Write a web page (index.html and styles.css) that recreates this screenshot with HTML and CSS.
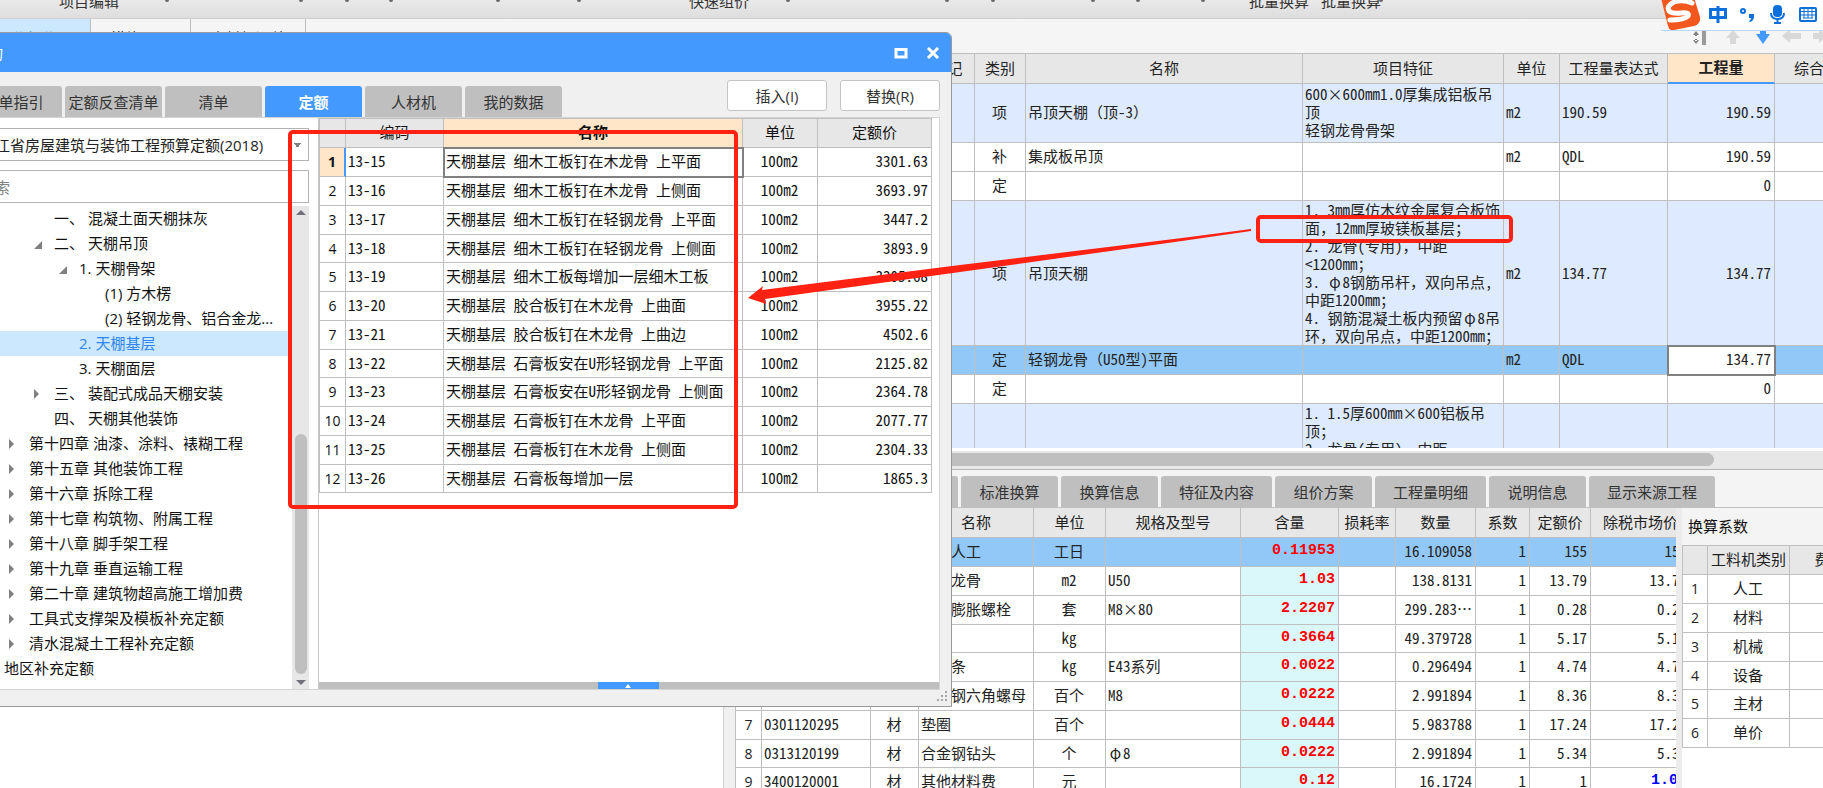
FILE: index.html
```html
<!DOCTYPE html>
<html lang="zh-CN">
<head>
<meta charset="utf-8">
<title>查询</title>
<link rel="stylesheet" href="styles.css">
</head>
<body>
<div class="app">
  <header class="ribbon">
    <span>项目编辑</span><i></i><i></i><i></i><i></i><i></i><i></i>
    <span>快速组价</span><i></i><i></i><i></i><i></i><i></i><i></i>
    <span>批量换算</span><span>批量换算</span><i></i>
  </header>

  <nav class="pages">
    <button class="page page-on">分部分项</button>
    <button class="page">措施项目</button>
    <button class="page page-wide">人材机汇总</button>
    <svg class="tools" width="134" height="16" viewBox="0 0 134 16" aria-hidden="true">
      <path d="M4 5l3-4 3 4zM4 10l3 4 3-4zM6 4h2v2H6zM6 9h2v2H6z" fill="#808080"/>
      <path d="M13 1h4v14h-4z" fill="#9a9a9a"/>
      <path d="M44 0l7 8h-4v6h-6V8h-4z" fill="#d8d8d8"/>
      <path d="M71 0h6v4h4l-7 10-7-10h4z" fill="#4499ff"/>
      <path d="M93 6l8-7v4h11v6h-11v4z" fill="#d8d8d8"/>
      <path d="M124 3h6V-1l8 7-8 7V9h-6z" fill="#d8d8d8"/>
    </svg>
  </nav>

  <main class="bill">
    <table class="grid bill-grid">
      <colgroup><col><col class="w54"><col class="w51"><col class="w277"><col class="w201"><col class="w56"><col class="w108"><col class="w107"><col class="w99"></colgroup>
      <thead>
        <tr><th></th><th>标记</th><th>类别</th><th>名称</th><th>项目特征</th><th>单位</th><th>工程量表达式</th><th class="hot">工程量</th><th>综合单价</th></tr>
      </thead>
      <tbody>
        <tr class="item h59"><td></td><td></td><td class="c">项</td><td>吊顶天棚（顶-3）</td><td>600×600mm1.0厚集成铝板吊<br>顶<br>轻钢龙骨骨架</td><td>m2</td><td>190.59</td><td class="r">190.59</td><td></td></tr>
        <tr><td></td><td></td><td class="c">补</td><td>集成板吊顶</td><td></td><td>m2</td><td>QDL</td><td class="r">190.59</td><td></td></tr>
        <tr><td></td><td></td><td class="c">定</td><td></td><td></td><td></td><td></td><td class="r">0</td><td></td></tr>
        <tr class="item h145"><td></td><td></td><td class="c">项</td><td>吊顶天棚</td><td>1. 3mm厚仿木纹金属复合板饰<br>面，12mm厚玻镁板基层；<br>2. 龙骨(专用)，中距<br>&lt;1200mm；<br>3. <span class="full">φ</span>8钢筋吊杆，双向吊点,<br>中距1200mm；<br>4. 钢筋混凝土板内预留<span class="full">φ</span>8吊<br>环，双向吊点，中距1200mm；</td><td>m2</td><td>134.77</td><td class="r">134.77</td><td></td></tr>
        <tr class="picked"><td></td><td></td><td class="c">定</td><td>轻钢龙骨（U50型)平面</td><td></td><td>m2</td><td>QDL</td><td class="r focus">134.77</td><td></td></tr>
        <tr><td></td><td></td><td class="c">定</td><td></td><td></td><td></td><td></td><td class="r">0</td><td></td></tr>
        <tr class="item"><td></td><td></td><td></td><td></td><td>1. 1.5厚600mm×600铝板吊<br>顶；<br>2. 龙骨(专用)，中距</td><td></td><td></td><td></td><td></td></tr>
      </tbody>
    </table>
  </main>

  <section class="detail">
    <div class="hscroll"><div class="hthumb"></div></div>
    <div class="panes">
      <div class="pane-left"></div>
      <div class="splitter"></div>
      <div class="pane-main">
        <nav class="tabs detail-tabs">
          <button class="tab">工料机显示</button><button class="tab">单价构成</button><button class="tab">标准换算</button><button class="tab">换算信息</button><button class="tab">特征及内容</button><button class="tab">组价方案</button><button class="tab">工程量明细</button><button class="tab">说明信息</button><button class="tab">显示来源工程</button>
        </nav>
        <div class="split">
          <div class="parts">
            <table class="grid parts-grid">
              <colgroup><col class="w26"><col class="w109"><col class="w48"><col class="w115"><col class="w72"><col class="w135"><col class="w98"><col class="w57"><col class="w80"><col class="w54"><col class="w61"><col class="w100"></colgroup>
              <thead>
                <tr><th></th><th>编码</th><th>类别</th><th>名称</th><th>单位</th><th>规格及型号</th><th>含量</th><th>损耗率</th><th>数量</th><th>系数</th><th>定额价</th><th>除税市场价</th></tr>
              </thead>
              <tbody>
                <tr class="picked"><td class="n">1</td><td></td><td class="c">人</td><td>二类人工</td><td class="c">工日</td><td></td><td class="qty">0.11953</td><td></td><td class="r">16.109058</td><td class="r">1</td><td class="r">155</td><td class="r">155</td></tr>
                <tr><td class="n">2</td><td></td><td class="c">材</td><td>轻钢龙骨</td><td class="c">m2</td><td>U50</td><td class="qty">1.03</td><td></td><td class="r">138.8131</td><td class="r">1</td><td class="r">13.79</td><td class="r">13.79</td></tr>
                <tr><td class="n">3</td><td></td><td class="c">材</td><td>金属膨胀螺栓</td><td class="c">套</td><td>M8×80</td><td class="qty">2.2207</td><td></td><td class="r">299.283…</td><td class="r">1</td><td class="r">0.28</td><td class="r">0.28</td></tr>
                <tr><td class="n">4</td><td></td><td class="c">材</td><td></td><td class="c">kg</td><td></td><td class="qty">0.3664</td><td></td><td class="r">49.379728</td><td class="r">1</td><td class="r">5.17</td><td class="r">5.17</td></tr>
                <tr><td class="n">5</td><td></td><td class="c">材</td><td>电焊条</td><td class="c">kg</td><td>E43系列</td><td class="qty">0.0022</td><td></td><td class="r">0.296494</td><td class="r">1</td><td class="r">4.74</td><td class="r">4.74</td></tr>
                <tr><td class="n">6</td><td></td><td class="c">材</td><td>镀锌钢六角螺母</td><td class="c">百个</td><td>M8</td><td class="qty">0.0222</td><td></td><td class="r">2.991894</td><td class="r">1</td><td class="r">8.36</td><td class="r">8.36</td></tr>
                <tr><td class="n">7</td><td>0301120295</td><td class="c">材</td><td>垫圈</td><td class="c">百个</td><td></td><td class="qty">0.0444</td><td></td><td class="r">5.983788</td><td class="r">1</td><td class="r">17.24</td><td class="r">17.24</td></tr>
                <tr><td class="n">8</td><td>0313120199</td><td class="c">材</td><td>合金钢钻头</td><td class="c">个</td><td><span class="full">φ</span>8</td><td class="qty">0.0222</td><td></td><td class="r">2.991894</td><td class="r">1</td><td class="r">5.34</td><td class="r">5.34</td></tr>
                <tr><td class="n">9</td><td>3400120001</td><td class="c">材</td><td>其他材料费</td><td class="c">元</td><td></td><td class="qty">0.12</td><td></td><td class="r">16.1724</td><td class="r">1</td><td class="r">1</td><td class="qty price">1.00</td></tr>
              </tbody>
            </table>
          </div>
          <aside class="factors">
            <h2>换算系数</h2>
            <table class="grid factor-grid">
              <colgroup><col class="w25"><col class="w82"><col class="w80"></colgroup>
              <thead><tr><th></th><th>工料机类别</th><th>费用</th></tr></thead>
              <tbody>
                <tr><td class="n">1</td><td class="c">人工</td><td></td></tr>
                <tr><td class="n">2</td><td class="c">材料</td><td></td></tr>
                <tr><td class="n">3</td><td class="c">机械</td><td></td></tr>
                <tr><td class="n">4</td><td class="c">设备</td><td></td></tr>
                <tr><td class="n">5</td><td class="c">主材</td><td></td></tr>
                <tr><td class="n">6</td><td class="c">单价</td><td></td></tr>
              </tbody>
            </table>
          </aside>
        </div>
      </div>
    </div>
  </section>
</div>

<section class="dialog" role="dialog" aria-labelledby="dlg-title">
  <header class="titlebar">
    <h1 id="dlg-title">查询</h1>
    <button class="win" aria-label="最大化"><svg width="14" height="12" viewBox="0 0 14 12"><path d="M2 2.5h10v7.500H2z" fill="none" stroke="#fff" stroke-width="3"/></svg></button>
    <button class="win" aria-label="关闭"><svg width="14" height="12" viewBox="0 0 14 12"><path d="M2 1l10 10M12 1L2 11" fill="none" stroke="#fff" stroke-width="3"/></svg></button>
  </header>
  <div class="toolbar">
    <nav class="tabs">
      <button class="tab">清单指引</button><button class="tab">定额反查清单</button><button class="tab">清单</button><button class="tab tab-on">定额</button><button class="tab">人材机</button><button class="tab">我的数据</button>
    </nav>
    <div class="actions"><button class="act">插入(I)</button><button class="act">替换(R)</button></div>
  </div>
  <div class="body">
    <div class="side">
      <select class="field" aria-label="定额库"><option>浙江省房屋建筑与装饰工程预算定额(2018)</option></select>
      <input class="field" type="text" placeholder="搜索" aria-label="搜索">
      <div class="treebox">
        <ul class="tree">
          <li class="l2">一、 混凝土面天棚抹灰</li>
          <li class="l2 open">二、 天棚吊顶</li>
          <li class="l3 open">1. 天棚骨架</li>
          <li class="l4">(1) 方木楞</li>
          <li class="l4">(2) 轻钢龙骨、铝合金龙...</li>
          <li class="l3 sel">2. 天棚基层</li>
          <li class="l3">3. 天棚面层</li>
          <li class="l2 shut">三、 装配式成品天棚安装</li>
          <li class="l2">四、 天棚其他装饰</li>
          <li class="l1 shut">第十四章 油漆、涂料、裱糊工程</li>
          <li class="l1 shut">第十五章 其他装饰工程</li>
          <li class="l1 shut">第十六章 拆除工程</li>
          <li class="l1 shut">第十七章 构筑物、附属工程</li>
          <li class="l1 shut">第十八章 脚手架工程</li>
          <li class="l1 shut">第十九章 垂直运输工程</li>
          <li class="l1 shut">第二十章 建筑物超高施工增加费</li>
          <li class="l1 shut">工具式支撑架及模板补充定额</li>
          <li class="l1 shut">清水混凝土工程补充定额</li>
          <li class="l0">地区补充定额</li>
        </ul>
        <div class="vscroll">
          <svg width="10" height="5" viewBox="0 0 10 5"><path d="M0 5l5-5 5 5z" fill="#70707a"/></svg>
          <div class="vthumb"></div>
          <svg width="10" height="5" viewBox="0 0 10 5"><path d="M0 0l5 5 5-5z" fill="#70707a"/></svg>
        </div>
      </div>
    </div>
    <div class="results">
      <div class="result-area">
        <table class="grid result-grid">
          <colgroup><col class="w26"><col class="w98"><col><col class="w75"><col class="w114"></colgroup>
          <thead><tr><th></th><th>编码</th><th class="hot">名称</th><th>单位</th><th>定额价</th></tr></thead>
          <tbody>
            <tr><td class="n cur">1</td><td>13-15</td><td class="focus">天棚基层 细木工板钉在木龙骨 上平面</td><td class="c">100m2</td><td class="r">3301.63</td></tr>
            <tr><td class="n">2</td><td>13-16</td><td>天棚基层 细木工板钉在木龙骨 上侧面</td><td class="c">100m2</td><td class="r">3693.97</td></tr>
            <tr><td class="n">3</td><td>13-17</td><td>天棚基层 细木工板钉在轻钢龙骨 上平面</td><td class="c">100m2</td><td class="r">3447.2</td></tr>
            <tr><td class="n">4</td><td>13-18</td><td>天棚基层 细木工板钉在轻钢龙骨 上侧面</td><td class="c">100m2</td><td class="r">3893.9</td></tr>
            <tr><td class="n">5</td><td>13-19</td><td>天棚基层 细木工板每增加一层细木工板</td><td class="c">100m2</td><td class="r">3305.68</td></tr>
            <tr><td class="n">6</td><td>13-20</td><td>天棚基层 胶合板钉在木龙骨 上曲面</td><td class="c">100m2</td><td class="r">3955.22</td></tr>
            <tr><td class="n">7</td><td>13-21</td><td>天棚基层 胶合板钉在木龙骨 上曲边</td><td class="c">100m2</td><td class="r">4502.6</td></tr>
            <tr><td class="n">8</td><td>13-22</td><td>天棚基层 石膏板安在U形轻钢龙骨 上平面</td><td class="c">100m2</td><td class="r">2125.82</td></tr>
            <tr><td class="n">9</td><td>13-23</td><td>天棚基层 石膏板安在U形轻钢龙骨 上侧面</td><td class="c">100m2</td><td class="r">2364.78</td></tr>
            <tr><td class="n">10</td><td>13-24</td><td>天棚基层 石膏板钉在木龙骨 上平面</td><td class="c">100m2</td><td class="r">2077.77</td></tr>
            <tr><td class="n">11</td><td>13-25</td><td>天棚基层 石膏板钉在木龙骨 上侧面</td><td class="c">100m2</td><td class="r">2304.33</td></tr>
            <tr><td class="n">12</td><td>13-26</td><td>天棚基层 石膏板每增加一层</td><td class="c">100m2</td><td class="r">1865.3</td></tr>
          </tbody>
        </table>
      </div>
      <div class="drawer"><button class="pull" aria-label="展开"><svg width="8" height="4" viewBox="0 0 8 4"><path d="M1 4l3-4 3 4z" fill="#fff"/></svg></button></div>
    </div>
  </div>
  <footer class="status">
    <svg width="11" height="11" viewBox="0 0 11 11"><path d="M8 0h2v2H8zM8 4h2v2H8zM4 4h2v2H4zM8 8h2v2H8zM4 8h2v2H4zM0 8h2v2H0z" fill="#a8a8a8"/></svg>
  </footer>
</section>

<div class="ime">
  <svg width="162" height="30" viewBox="0 0 162 30" aria-hidden="true">
    <path d="M0 -2L32 -6 39 17Q40 24 33 26L13 30Q8 31 7 26z" fill="#f2581d"/>
    <path d="M31 3Q22 -1 13 2Q5 6 8 11Q11 14 20 13Q29 12 27 16Q23 20 9 20" fill="none" stroke="#fff" stroke-width="5" stroke-linecap="round"/>
    <g fill="none" stroke="#0d6fdb" stroke-width="3">
      <path d="M49.500 9.500h15v8h-15zM57 6v17"/>
      <circle cx="82" cy="11" r="2" stroke-width="2"/>
      <path d="M110 13q0 6 6.500 6t6.500-6" stroke-width="2"/>
      <path d="M116.500 19v5M113 23h7" stroke-width="2"/>
    </g>
    <path d="M88 14h5v4q-1 3-4 4l-1-1q2-1 2-3h-2z" fill="#0d6fdb"/>
    <rect x="112" y="5" width="9" height="12" rx="4" fill="#0d6fdb"/>
    <rect x="139" y="8" width="16" height="13" rx="1" fill="none" stroke="#0d6fdb" stroke-width="2"/>
    <path d="M139 11.500h16M139 15h16M143 8v10M147 8v10M151 8v10M142 18h10" fill="none" stroke="#0d6fdb" stroke-width="1"/>
  </svg>
</div>

<svg class="marks" width="1823" height="788" viewBox="0 0 1823 788" aria-hidden="true">
  <rect x="290" y="132" width="446" height="375" rx="3" fill="none" stroke="#ff2213" stroke-width="4"/>
  <rect x="1258" y="217" width="253" height="24" rx="3" fill="none" stroke="#ff2213" stroke-width="4"/>
  <path d="M748 298L763 286 762 290 960 265 1182 238 1251 229 1251 231 1182 241 960 272 765 299 766 304z" fill="#ff2213"/>
</svg>
</body>
</html>
```
FILE: styles.css
```css
* { box-sizing: border-box; }
html, body { margin: 0; height: 100%; overflow: hidden; }
body {
  font: 15px/20px "Open Sans", "Noto Sans CJK SC", sans-serif;
  color: #222;
  background: #fff;
}
button, input, select { font: inherit; color: inherit; margin: 0; }
button { padding: 0; border: 0; cursor: pointer; }
svg { display: block; }

.app { height: 100vh; display: flex; flex-direction: column; }

/* ribbon and page tabs */
.ribbon {
  flex: 0 0 19px;
  display: grid;
  grid-template-columns: 106px 134px 46px 44px 107px 81px 112px 97px 159px 46px 100px 45px 65px 48px 72px 58px 1fr;
  align-items: start;
  padding-left: 59px;
  overflow: hidden;
  color: #333;
  background: linear-gradient(#e9e9e9, #dedede);
  border-bottom: 1px solid #cfcfcf;
}
.ribbon span { margin-top: -9px; white-space: nowrap; }
.ribbon i { width: 4px; height: 2px; background: #666; border-radius: 0 0 2px 2px; }
.pages { flex: 0 0 34px; display: flex; background: #f5f5f5; }
.page { width: 100px; padding-top: 3px; background: #f5f5f5; border-right: 1px solid #bdbdbd; }
.page-on { width: 91px; color: #3a8ff5; background: #cce8ff; padding-right: 8px; }
.page-wide { width: 115px; }
.tools { margin: 11px 0 0 auto; }

/* shared data grid */
.grid {
  table-layout: fixed;
  border-collapse: separate;
  border-spacing: 0;
  font: 15px/18px "Noto Sans Mono CJK SC", "Noto Sans CJK SC", monospace;
}
.grid th, .grid td {
  padding: 0 3px 2px 2px;
  border: solid #bfbfbf;
  border-width: 0 1px 1px 0;
  overflow: hidden;
  white-space: nowrap;
  text-align: left;
}
.grid th {
  height: 30px;
  padding: 0 0 2px;
  font-weight: 400;
  text-align: center;
  background: #e7e7e7;
}
.grid td { height: 29px; background: #fff; }
.grid tr:nth-child(4n) td { height: 28px; }
.grid th.hot { font-weight: 700; background: #ffe6c8; border-bottom: 1px solid #4499ff; }
.grid .c { text-align: center; }
.grid .r { text-align: right; }
.grid .n { padding: 0; text-align: center; font-family: "Open Sans", sans-serif; font-size: 14px; }
.grid .cur { font-weight: 700; background: #ffe6c8; border-right: 2px solid #4499ff; }
.grid tr.item td { background: #ddeaff; }
.grid tr.picked td { background: #92c8f7; }
.grid td.focus, .grid tr.picked td.focus { background: #fff; outline: 2px solid #808080; outline-offset: -1px; }
.grid .qty {
  color: #f00;
  font: 700 15px/18px "Liberation Mono", monospace;
  text-align: right;
  background: #daf8f9;
}
.grid .price { color: #00f; background: #fff; }
.full { display: inline-block; width: 15px; text-align: center; }

.w25 { width: 25px; } .w26 { width: 26px; } .w48 { width: 48px; } .w51 { width: 51px; }
.w54 { width: 54px; } .w56 { width: 56px; } .w57 { width: 57px; } .w61 { width: 61px; }
.w72 { width: 72px; } .w75 { width: 75px; } .w80 { width: 80px; } .w82 { width: 82px; }
.w98 { width: 98px; } .w99 { width: 99px; } .w100 { width: 100px; } .w107 { width: 107px; }
.w108 { width: 108px; } .w109 { width: 109px; } .w114 { width: 114px; } .w115 { width: 115px; }
.w135 { width: 135px; } .w201 { width: 201px; } .w277 { width: 277px; }

/* bill of quantities */
.bill { flex: 1 1 0; min-height: 0; overflow: hidden; border-top: 1px solid #bfbfbf; }
.bill-grid { width: calc(100% + 51px); }
.bill-grid th.hot { border-bottom: 2px solid #4499ff; }
.grid tr.h59 td { height: 59px; }
.grid tr.h145 td { height: 145px; padding-bottom: 0; }

/* lower panes */
.detail { flex: 0 0 340px; display: flex; flex-direction: column; background: #f4f4f4; overflow: hidden; }
.hscroll { flex: 0 0 22px; padding: 2px 109px 0 0; background: #e7e7e7; border-top: 3px solid #fff; border-bottom: 1px solid #b5b5b5; }
.hthumb { height: 13px; background: #bfbfbf; border-radius: 7px; }
.panes { flex: 1; min-height: 0; display: flex; }
.pane-left { flex: 0 0 724px; background: #fff; border-right: 1px solid #d0d0d0; }
.splitter { flex: 0 0 11px; background: #f0f0f0; }
.pane-main { flex: 1; min-width: 0; display: flex; flex-direction: column; padding-top: 6px; }
.tabs { display: flex; gap: 3px; }
.detail-tabs { padding-left: 12px; }
.tab {
  min-width: 97px;
  height: 31px;
  padding: 0 18px;
  color: #333;
  background: #bfbfbf;
  border-radius: 3px 3px 0 0;
  white-space: nowrap;
}
.tab-on { color: #fff; font-weight: 700; background: #4499ff; }
.split { flex: 1; min-height: 0; display: flex; border-top: 1px solid #bfbfbf; }
.parts { flex: 1; min-width: 0; overflow: hidden; background: #fff; border-left: 1px solid #bfbfbf; }
.parts-grid { width: 955px; }
.factors { flex: 0 0 147px; overflow: hidden; background: #fff; border-left: 6px solid #ececec; }
.factors h2 { margin: 0; padding: 8px 6px 9px; font: 15px/20px "Noto Sans CJK SC", sans-serif; color: #111; background: #f4f4f4; }
.factor-grid { width: 187px; border-top: 1px solid #bfbfbf; border-left: 1px solid #bfbfbf; }
.factor-grid th { height: 29px; }

/* query dialog: its left edge lies off screen */
.dialog {
  position: absolute;
  left: -40px;
  top: 32px;
  width: 992px;
  height: 675px;
  display: flex;
  flex-direction: column;
  background: #f0f0f0;
  border: 1px solid #999;
  border-radius: 0 6px 0 0;
  overflow: hidden;
}
.titlebar { flex: 0 0 39px; display: flex; align-items: center; gap: 18px; padding: 0 11px 0 12px; background: #4499ff; }
.titlebar h1 { margin: 0 auto 0 0; color: #fff; font-size: 15px; font-weight: 400; }
.win { background: none; }
.toolbar { flex: 0 0 45px; display: flex; align-items: flex-end; padding: 0 11px 0 4px; }
.toolbar .tab { width: 97px; padding: 0; }
.actions { display: flex; gap: 13px; margin: 0 0 6px auto; }
.act { width: 100px; height: 31px; color: #333; background: #fff; border: 1px solid #c4c4c4; border-radius: 3px; }
.body { flex: 1; min-height: 0; display: flex; margin-right: 11px; background: #fff; border: solid #d4d4d4; border-width: 1px 1px 1px 0; }
.side { flex: 0 0 357px; display: flex; flex-direction: column; padding: 10px 9px 0 0; }
.field { margin: 0 0 9px 10px; height: 33px; padding: 0 8px; background: #fff; border: 1px solid #b4b4b4; border-radius: 0; color: #222; }
select.field {
  appearance: none;
  background: linear-gradient(#808080, #808080) 322px 14px / 7px 1px no-repeat, linear-gradient(#808080, #808080) 323px 15px / 5px 1px no-repeat, linear-gradient(#808080, #808080) 324px 16px / 3px 2px no-repeat, #fff;
}
.field::placeholder { color: #808080; }
.treebox { flex: 1; min-height: 0; display: flex; margin-top: -6px; }
.tree { flex: 1; margin: 0; padding: 0; list-style: none; color: #111; overflow: hidden; }
.tree li { height: 25px; line-height: 25px; white-space: nowrap; }
.l0 { padding-left: 43px; } .l1 { padding-left: 68px; } .l2 { padding-left: 93px; }
.l3 { padding-left: 118px; } .l4 { padding-left: 144px; }
.tree .sel { color: #2f86ec; background: #cce8ff; }
.open::before, .shut::before { content: ""; display: inline-block; border-style: solid; }
.open::before { margin: 0 13px 0 -20px; border-width: 0 0 8px 8px; margin-right: 12px; border-color: transparent transparent #808080; }
.shut::before { margin: 0 15px 0 -20px; border-width: 5px 0 5px 5px; border-color: transparent transparent transparent #808080; }
.vscroll { flex: 0 0 17px; display: flex; flex-direction: column; align-items: center; justify-content: space-between; padding: 4px 0; background: #e7e7e7; }
.vthumb { width: 12px; height: 240px; margin: auto 0 6px; background: #bfbfbf; border-radius: 6px; }
.results { flex: 1; min-width: 0; display: flex; flex-direction: column; border-left: 1px solid #c8c8c8; }
.result-area { flex: 1; padding: 0 7px 0 0; }
.result-grid { width: 100%; border-top: 1px solid #bfbfbf; border-left: 1px solid #bfbfbf; color: #111; }
.result-grid th { height: 29px; }
.drawer { flex: 0 0 7px; display: flex; justify-content: center; background: #bfbfbf; }
.pull { width: 61px; margin-right: 2px; background: #4499ff; display: flex; justify-content: center; align-items: center; }
.status { flex: 0 0 16px; display: flex; justify-content: flex-end; padding: 1px 3px; }

/* input method bar and callouts */
.ime { position: absolute; top: 0; right: 0; background: linear-gradient(90deg, transparent 25px, #fff 25px); border-bottom: 1px solid #bcd8f8; }
.marks { position: absolute; left: 0; top: 0; pointer-events: none; }
```
